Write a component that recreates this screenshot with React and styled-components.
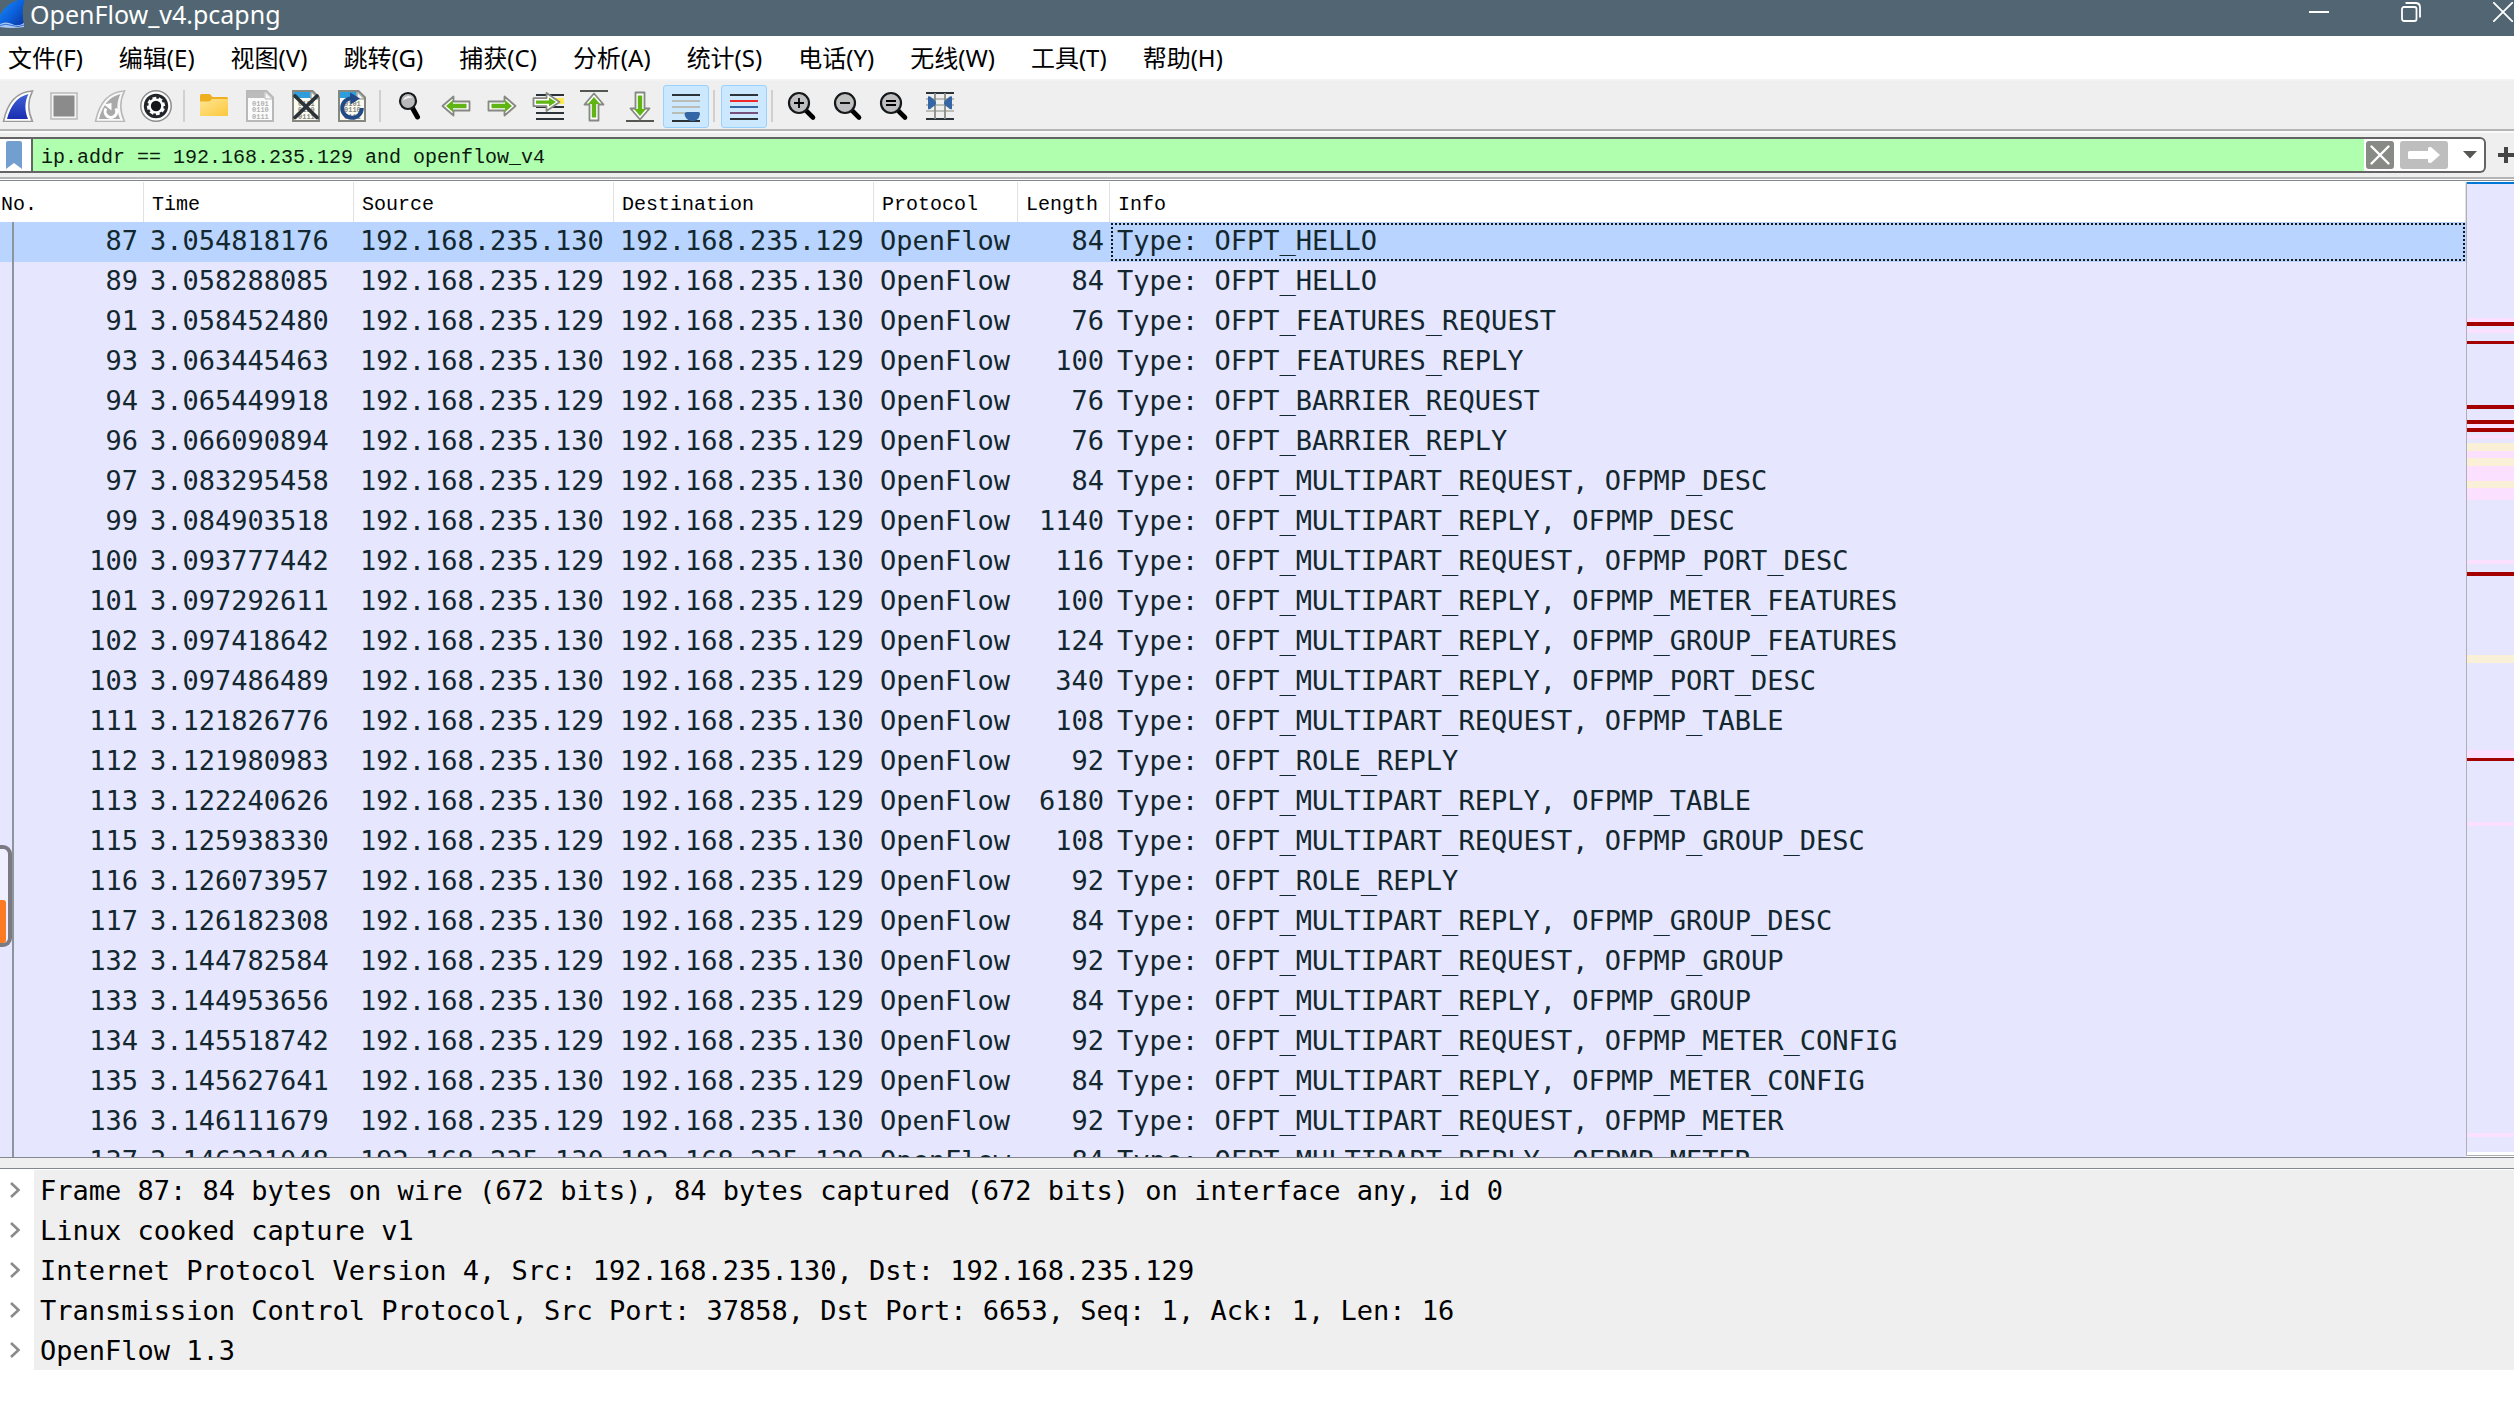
import React, { useState } from 'react';
import styled, { createGlobalStyle } from 'styled-components';

const GlobalStyle = createGlobalStyle`
  * {
    box-sizing: border-box;
  }

  body {
    margin: 0;
    overflow: hidden;
    background: #ffffff;
  }

  button {
    border: 0;
    padding: 0;
    background: none;
    font: inherit;
    color: inherit;
  }

  svg {
    display: block;
    flex: none;
  }
`;

const Window = styled.div`
  display: flex;
  flex-direction: column;
  height: 100vh;
  overflow: hidden;
`;

const TitleBar = styled.header`
  display: flex;
  flex: none;
  justify-content: space-between;
  align-items: flex-start;
  height: 36px;
  background: #516672;
  color: #ffffff;
`;

const TitleName = styled.h1`
  display: flex;
  gap: 5px;
  margin: 0;
  font: 400 25px/28px "Noto Sans", "Noto Sans CJK SC", sans-serif;
`;

const WindowControls = styled.div`
  display: flex;
  gap: 72px;
  padding: 2px 1px 0 0;
`;

const MenuBar = styled.nav`
  display: flex;
  flex: none;
  gap: 36px;
  height: 45px;
  padding: 0 8px;
  border-bottom: 2px solid #f3f3f3;
  background: #ffffff;
`;

const MenuItem = styled.button`
  color: #000000;
  font: 400 24px/42px "Noto Sans", "Noto Sans CJK SC", sans-serif;
`;

const ToolBar = styled.div`
  display: flex;
  flex: none;
  align-items: center;
  height: 50px;
  margin-left: -5px;
  padding-top: 2px;
  border-bottom: 2px solid #b5b5b5;
  background: #efefef;
`;

const ToolButton = styled.button`
  display: flex;
  justify-content: center;
  align-items: center;
  width: 46px;
  height: 43px;
  border: 1px solid ${(p) => (p.$active ? '#99d1ff' : 'transparent')};
  border-radius: 3px;
  background: ${(p) => (p.$active ? '#cce8ff' : 'transparent')};
`;

const Separator = styled.span`
  width: 2px;
  height: 32px;
  margin: 0 6px 0 4px;
  background: #d0d0d0;
`;

const FilterBar = styled.form`
  display: flex;
  flex: none;
  align-items: center;
  gap: 12px;
  height: 48px;
  border-top: 2px solid #f9f9f9;
  border-bottom: 2px solid #b5b5b5;
  background: #efefef;
`;

const FilterBox = styled.div`
  display: flex;
  flex: 1;
  align-items: center;
  height: 36px;
  border: 2px solid #646464;
  border-left: 0;
  border-radius: 0 6px 6px 0;
  background: #ffffff;
`;

const BookmarkButton = styled.button`
  display: flex;
  align-items: center;
  width: 33px;
  height: 32px;
  padding-left: 6px;
  border-right: 2px solid #646464;
`;

const FilterInput = styled.input`
  flex: 1;
  min-width: 0;
  height: 32px;
  padding: 4px 8px 0;
  border: 0;
  outline: 0;
  border-radius: 0;
  background: #afffaf;
  color: #0d1a0d;
  font: 400 20px/24px "Liberation Mono", monospace;
`;

const FilterActions = styled.div`
  display: flex;
  align-items: center;
  gap: 6px;
  padding: 0 6px 0 2px;
`;

const DropButton = styled.button`
  padding-left: 8px;
`;

const PacketPane = styled.main`
  position: relative;
  display: flex;
  flex: 1;
  min-height: 0;
  margin-top: 1px;
  border-top: 1px solid #828790;
  border-bottom: 1px solid #828790;
`;

const PacketList = styled.div`
  flex: 1;
  min-width: 0;
  overflow: hidden;
  padding-top: 1px;
`;

const Table = styled.table`
  width: 100%;
  table-layout: fixed;
  border-collapse: separate;
  border-spacing: 0;
  white-space: pre;
`;

const Col = styled.col`
  width: ${(p) => (p.$width ? `${p.$width}px` : 'auto')};
`;

const HeadCell = styled.th`
  height: 40px;
  padding: 6px 0 0 ${(p) => (p.$first ? 1 : 8)}px;
  border-right: 1px solid #e2e2e2;
  background: #ffffff;
  color: #000000;
  text-align: left;
  font: 400 20px/24px "Liberation Mono", monospace;
`;

const Row = styled.tr`
  background: ${(p) => (p.$selected ? '#b8d4ff' : '#e6e6ff')};
`;

const Cell = styled.td`
  height: 40px;
  padding: 0 6px 2px;
  overflow: hidden;
  color: #12272e;
  text-align: ${(p) => (p.$right ? 'right' : 'left')};
  font: 400 27px/38px "DejaVu Sans Mono", monospace;
`;

const NumberCell = styled(Cell)`
  background: linear-gradient(#8b959b, #8b959b) 12px 0 / 2px 100% no-repeat;
`;

const InfoCell = styled(Cell)`
  padding-left: 7px;
  outline: ${(p) => (p.$focused ? '2px dotted #12171c' : 'none')};
  outline-offset: -3px;
`;

const MiniMap = styled.aside`
  width: 48px;
  margin: 1px 0;
  border-left: 1px solid #b0b0b0;
  border-bottom: 1px solid #b0b0b0;
  overflow: hidden;

  svg {
    width: 100%;
    height: calc(100% - 3px);
    background: #e6e6ff;
  }
`;

// floats over the left edge of the list
const EdgeHandle = styled.div`
  position: absolute;
  left: 0;
  top: 664px;
  display: flex;
  align-items: flex-end;
  width: 12px;
  height: 102px;
  border: 4px solid #7b7a83;
  border-left: 0;
  border-radius: 0 9px 9px 0;
  background: #f0efff;
`;

const EdgeLevel = styled.span`
  width: 6px;
  height: 43px;
  border-radius: 0 3px 3px 0;
  background: #fc7a22;
`;

const Splitter = styled.div`
  flex: none;
  height: 11px;
  border-bottom: 1px solid #828790;
  background: #efefef;
`;

const DetailsPane = styled.section`
  flex: none;
  padding: 1px 0 35px;
  background: #ffffff;
`;

const DetailRow = styled.button`
  display: flex;
  align-items: center;
  gap: 12px;
  width: 100%;
  height: 40px;
  padding-left: 8px;
`;

const DetailText = styled.span`
  flex: 1;
  padding: 1px 6px 0;
  background: #efefef;
  color: #000000;
  text-align: left;
  white-space: pre;
  font: 400 27px/39px "DejaVu Sans Mono", monospace;
`;

const menus = ['文件(F)', '编辑(E)', '视图(V)', '跳转(G)', '捕获(C)', '分析(A)', '统计(S)', '电话(Y)', '无线(W)', '工具(T)', '帮助(H)'];

const HOST_A = '192.168.235.130';
const HOST_B = '192.168.235.129';

// no, time, sent by A, length, info
const packets = [
  [87, '3.054818176', true, 84, 'OFPT_HELLO'],
  [89, '3.058288085', false, 84, 'OFPT_HELLO'],
  [91, '3.058452480', false, 76, 'OFPT_FEATURES_REQUEST'],
  [93, '3.063445463', true, 100, 'OFPT_FEATURES_REPLY'],
  [94, '3.065449918', false, 76, 'OFPT_BARRIER_REQUEST'],
  [96, '3.066090894', true, 76, 'OFPT_BARRIER_REPLY'],
  [97, '3.083295458', false, 84, 'OFPT_MULTIPART_REQUEST, OFPMP_DESC'],
  [99, '3.084903518', true, 1140, 'OFPT_MULTIPART_REPLY, OFPMP_DESC'],
  [100, '3.093777442', false, 116, 'OFPT_MULTIPART_REQUEST, OFPMP_PORT_DESC'],
  [101, '3.097292611', true, 100, 'OFPT_MULTIPART_REPLY, OFPMP_METER_FEATURES'],
  [102, '3.097418642', true, 124, 'OFPT_MULTIPART_REPLY, OFPMP_GROUP_FEATURES'],
  [103, '3.097486489', true, 340, 'OFPT_MULTIPART_REPLY, OFPMP_PORT_DESC'],
  [111, '3.121826776', false, 108, 'OFPT_MULTIPART_REQUEST, OFPMP_TABLE'],
  [112, '3.121980983', true, 92, 'OFPT_ROLE_REPLY'],
  [113, '3.122240626', true, 6180, 'OFPT_MULTIPART_REPLY, OFPMP_TABLE'],
  [115, '3.125938330', false, 108, 'OFPT_MULTIPART_REQUEST, OFPMP_GROUP_DESC'],
  [116, '3.126073957', true, 92, 'OFPT_ROLE_REPLY'],
  [117, '3.126182308', true, 84, 'OFPT_MULTIPART_REPLY, OFPMP_GROUP_DESC'],
  [132, '3.144782584', false, 92, 'OFPT_MULTIPART_REQUEST, OFPMP_GROUP'],
  [133, '3.144953656', true, 84, 'OFPT_MULTIPART_REPLY, OFPMP_GROUP'],
  [134, '3.145518742', false, 92, 'OFPT_MULTIPART_REQUEST, OFPMP_METER_CONFIG'],
  [135, '3.145627641', true, 84, 'OFPT_MULTIPART_REPLY, OFPMP_METER_CONFIG'],
  [136, '3.146111679', false, 92, 'OFPT_MULTIPART_REQUEST, OFPMP_METER'],
  [137, '3.146221048', true, 84, 'OFPT_MULTIPART_REPLY, OFPMP_METER'],
];

const details = [
  'Frame 87: 84 bytes on wire (672 bits), 84 bytes captured (672 bits) on interface any, id 0',
  'Linux cooked capture v1',
  'Internet Protocol Version 4, Src: 192.168.235.130, Dst: 192.168.235.129',
  'Transmission Control Protocol, Src Port: 37858, Dst Port: 6653, Seq: 1, Ack: 1, Len: 16',
  'OpenFlow 1.3',
];

const PINK = '#fce0ff';
const RED = '#a40000';
const SAND = '#faf0d7';

// y, height, colour
const stripes = [
  [0, 2, '#0078d7'],
  [136, 4, PINK], [140, 4, RED], [147, 4, PINK], [159, 3, RED],
  [223, 4, RED], [238, 4, RED], [242, 4, PINK], [246, 4, RED], [253, 4, PINK],
  [261, 8, SAND], [269, 7, PINK], [276, 8, SAND], [284, 15, PINK], [299, 7, SAND], [306, 12, PINK],
  [378, 4, PINK], [390, 4, RED], [473, 8, SAND], [568, 8, PINK], [576, 3, RED],
  [640, 4, PINK], [951, 4, PINK],
];

const Icon = ({ children }) => (
  <svg width="32" height="32" viewBox="0 0 32 32" fill="none" aria-hidden="true">{children}</svg>
);

const FinIcon = () => (
  <Icon>
    <path d="M1.5 31.5C5 14 13 2 30.5 1C25.500 11 25.500 21 30.5 31.5Z" fill="#fff" stroke="#9a9a9a" strokeWidth="1.6" />
    <path d="M5 29C8.5 16 14.5 7 26.5 4C22.5 12 22.5 20 26 29Z" fill="url(#fin)" />
    <defs>
      <linearGradient id="fin" x1="0" y1="0" x2="0" y2="1">
        <stop stopColor="#4060d8" />
        <stop offset="1" stopColor="#1a2fb0" />
      </linearGradient>
    </defs>
  </Icon>
);

const StopIcon = () => (
  <Icon>
    <rect x="3" y="3" width="26" height="26" fill="#f4f4f4" stroke="#bdbdbd" strokeWidth="1.6" />
    <rect x="5.5" y="5.5" width="21" height="21" fill="#8b8b8b" />
  </Icon>
);

const RestartIcon = () => (
  <Icon>
    <path d="M1.5 31.5C5 14 13 2 30.5 1C25.5 11 25.5 21 30.5 31.5Z" fill="#f8f8f8" stroke="#b9b9b9" strokeWidth="1.6" />
    <path d="M5 29C8.5 16 14.5 7 26.5 4C22.5 12 22.5 20 26 29Z" fill="#a9a9a9" />
    <path d="M12 18.500A5.800 5.800 0 1 0 21.800 18.500" stroke="#fff" strokeWidth="3" />
    <path d="M10 14.500L17.500 13V20.500Z" fill="#fff" />
  </Icon>
);

const OptionsIcon = () => (
  <Icon>
    <circle cx="16" cy="16" r="15.2" fill="#fff" stroke="#8d8d8d" strokeWidth="1.5" />
    <circle cx="16" cy="16" r="12.2" fill="#22262a" />
    <circle cx="16" cy="16" r="9.2" fill="#fff" />
    <circle cx="16" cy="16" r="8.800" stroke="#22262a" strokeWidth="2.4" strokeDasharray="2.8 4.110" />
    <circle cx="16" cy="16" r="5.2" fill="#15181b" />
  </Icon>
);

const FolderIcon = () => (
  <Icon>
    <path d="M2 5.5Q2 4 3.5 4H11Q12 4 12.8 5L14.5 7H28.5Q30 7 30 8.5V24H2z" fill="#eeb021" />
    <path d="M2 11.5H10.5Q12 11.5 13 10.2L14 9H30V25Q30 26 29 26H3Q2 26 2 25Z" fill="url(#folder)" />
    <defs>
      <linearGradient id="folder" x1="0" y1="0" x2="1" y2="1">
        <stop stopColor="#ffe694" />
        <stop offset="1" stopColor="#fbc73a" />
      </linearGradient>
    </defs>
  </Icon>
);

const Bits = styled.text`
  font: 700 7px "Liberation Mono", monospace;
`;

const Sheet = ({ paper, edge, top, ink }) => (
  <>
    <path d="M3 1H22.5L29 7.5V31H3Z" fill={paper} stroke={edge} strokeWidth="2" />
    <path d="M4 2H20.5V8H4Z" fill={top} />
    <path d="M21 1.5V9H28.5Z" fill="#f5f5f5" stroke={edge} />
    <Bits x="8" y="16" fill={ink}>0101</Bits>
    <Bits x="8" y="22" fill={ink}>0110</Bits>
    <Bits x="8" y="29" fill={ink}>0111</Bits>
  </>
);

const SaveIcon = () => (
  <Icon><Sheet paper="#fbfbfb" edge="#b9b9b9" top="#bcbcbc" ink="#b0b0b0" /></Icon>
);

const CloseFileIcon = () => (
  <Icon>
    <Sheet paper="#fbfbf0" edge="#858781" top="#2d9ddb" ink="#858781" />
    <path d="M5 6L27 27.5M27 6L5 27.5" stroke="#2b3338" strokeWidth="3.8" strokeLinecap="round" />
  </Icon>
);

const ReloadIcon = () => (
  <Icon>
    <Sheet paper="#fbfbf0" edge="#858781" top="#2d9ddb" ink="#858781" />
    <path d="M17 8.3A9.800 9.800 0 1 0 25.8 18" stroke="#214a87" strokeWidth="4" />
    <path d="M14 2.5L24 8.5L14.5 14.5Z" fill="#214a87" />
  </Icon>
);

const FindIcon = () => (
  <Icon>
    <path d="M18.5 18L23.5 27" stroke="#000" strokeWidth="5" strokeLinecap="round" />
    <circle cx="14" cy="11" r="8" fill="#b9b9b9" stroke="#16191b" strokeWidth="2.2" />
    <path d="M9 10.5Q10 6.5 14.5 6Q17.5 6 18.5 8Q14 7 9 10.5Z" fill="#f3f3f3" />
  </Icon>
);

const Arrow = ({ transform }) => (
  <g transform={transform}>
    <path d="M2.5 16L13.5 6.5V11.5H29.5V20.5H13.5V25.5Z" fill="#fff" stroke="#868882" strokeWidth="1.8" strokeLinejoin="round" />
    <path d="M6 16L13 10V13.8H26.5V18.2H13V22Z" fill="#60b414" />
  </g>
);

const PrevIcon = () => <Icon><Arrow /></Icon>;
const NextIcon = () => <Icon><Arrow transform="rotate(180 16 16)" /></Icon>;

const GotoIcon = () => (
  <Icon>
    <path d="M4 5H32M4 17H32M4 23H32M4 29H32" stroke="#2b3338" strokeWidth="2" />
    <path d="M22 8H32V14H22Z" fill="#fce94f" />
    <path d="M1.5 8.2H14.5V3L27.5 12L14.5 21V16.2H1.5Z" fill="#fff" stroke="#868882" strokeWidth="1.8" strokeLinejoin="round" />
    <path d="M4 10.5H17V7.5L24 12L17 16.5V13.8H4Z" fill="#60b414" />
  </Icon>
);

const FirstIcon = () => (
  <Icon>
    <path d="M2 1H30" stroke="#555753" strokeWidth="2" />
    <Arrow transform="translate(0 1) rotate(90 16 16)" />
  </Icon>
);

const LastIcon = () => (
  <Icon>
    <path d="M2 31H30" stroke="#555753" strokeWidth="2" />
    <Arrow transform="rotate(-90 16 16)" />
  </Icon>
);

const ScrollIcon = () => (
  <Icon>
    <path d="M2 5H30M2 31H30" stroke="#2b3338" strokeWidth="2" />
    <path d="M2 11H30M2 17H30M2 23H30" stroke="#babdb6" strokeWidth="2" />
    <path d="M14.5 24Q15 22 17 22H28Q30 22 30 24Q29.5 28 26.5 30Q25.5 31 22.5 31T18.5 30Q15 28 14.5 24Z" fill="#3465a4" />
  </Icon>
);

const ColorizeIcon = () => (
  <Icon>
    <path d="M2 5H30M2 29H30" stroke="#2b3338" strokeWidth="2" />
    <path d="M2 11H30" stroke="#ef2929" strokeWidth="2" />
    <path d="M2 17H30" stroke="#3465a4" strokeWidth="2" />
    <path d="M2 23H30" stroke="#75507b" strokeWidth="2" />
  </Icon>
);

const ZoomIcon = ({ sign }) => (
  <Icon>
    <path d="M19.5 20L27 27.5" stroke="#000" strokeWidth="4.6" strokeLinecap="round" />
    <circle cx="13" cy="13" r="10" fill="#bfbfbf" stroke="#15181b" strokeWidth="2.2" />
    <path d={sign} stroke="#000" strokeWidth="1.8" />
  </Icon>
);

const ZoomInIcon = () => <ZoomIcon sign="M8 13H18M13 8V18" />;
const ZoomOutIcon = () => <ZoomIcon sign="M8 13H18" />;
const ZoomResetIcon = () => <ZoomIcon sign="M8 11H18M8 15H18" />;

const ColumnsIcon = () => (
  <Icon>
    <path d="M2 9H30M2 15H30M2 21H30" stroke="#babdb6" strokeWidth="1.8" />
    <path d="M2 3H30M2 29H30" stroke="#2b3338" strokeWidth="2" />
    <path d="M11 3V29M21 3V29" stroke="#888a85" strokeWidth="1.8" />
    <path d="M4 6.5Q6 5.5 8 8Q12 11 12 13T8 17.5Q6 20 4 19Z" fill="#3465a4" />
    <path d="M28 6.5Q26 5.5 24 8Q20 11 20 13T24 17.5Q26 20 28 19Z" fill="#3465a4" />
  </Icon>
);

const tools = [
  ['Start capture', FinIcon],
  ['Stop capture', StopIcon],
  ['Restart capture', RestartIcon],
  ['Capture options', OptionsIcon],
  null,
  ['Open', FolderIcon],
  ['Save', SaveIcon],
  ['Close file', CloseFileIcon],
  ['Reload', ReloadIcon],
  null,
  ['Find packet', FindIcon],
  ['Previous packet', PrevIcon],
  ['Next packet', NextIcon],
  ['Go to packet', GotoIcon],
  ['First packet', FirstIcon],
  ['Last packet', LastIcon],
  ['Auto scroll', ScrollIcon, true],
  null,
  ['Colorize', ColorizeIcon, true],
  null,
  ['Zoom in', ZoomInIcon],
  ['Zoom out', ZoomOutIcon],
  ['Normal size', ZoomResetIcon],
  ['Resize columns', ColumnsIcon],
];

const Title = () => (
  <TitleBar>
    <TitleName>
      <svg width="25" height="28" viewBox="0 0 25 28" aria-hidden="true">
        <path d="M0 15Q8 0 25 -1Q21 8 24 27H0Z" fill="url(#logo)" />
        <path d="M0 24Q6 21 12 24T24 23V27Q12 29 0 27Z" fill="#a9c8f5" />
        <path d="M0 25.5Q6 23 12 25.5T24 25" stroke="#3470d8" fill="none" />
        <defs>
          <linearGradient id="logo" x1="0" y1="0" x2="1" y2="1">
            <stop stopColor="#1c8cf5" />
            <stop offset=".5" stopColor="#0b62dd" />
            <stop offset="1" stopColor="#0a2f9c" />
          </linearGradient>
        </defs>
      </svg>
      OpenFlow_v4.pcapng
    </TitleName>
    <WindowControls>
      <button aria-label="Minimize">
        <svg width="20" height="20"><path d="M0 10H20" stroke="#fff" strokeWidth="2" /></svg>
      </button>
      <button aria-label="Restore">
        <svg width="20" height="20" fill="none" stroke="#fff" strokeWidth="1.8">
          <rect x="1" y="5" width="14.5" height="14" rx="2" />
          <path d="M4.5 1H14.5Q19 1 19 5.5V15.5" />
        </svg>
      </button>
      <button aria-label="Close">
        <svg width="20" height="20"><path d="M0 0L20 20M20 0L0 20" stroke="#fff" strokeWidth="1.8" /></svg>
      </button>
    </WindowControls>
  </TitleBar>
);

const Filter = () => {
  const [filter, setFilter] = useState('ip.addr == 192.168.235.129 and openflow_v4');

  return (
    <FilterBar onSubmit={(e) => e.preventDefault()}>
      <FilterBox>
        <BookmarkButton type="button" aria-label="Bookmarks">
          <svg width="16" height="28"><path d="M0 2Q0 0 2 0H14Q16 0 16 2V28L8 22L0 28Z" fill="#729fcf" /></svg>
        </BookmarkButton>
        <FilterInput
          aria-label="Display filter"
          spellCheck={false}
          value={filter}
          onChange={(e) => setFilter(e.target.value)}
        />
        <FilterActions>
          <button type="button" aria-label="Clear" onClick={() => setFilter('')}>
            <svg width="28" height="28">
              <rect width="28" height="28" rx="3" fill="#888a85" />
              <path d="M5.5 5.5L22.5 22.5M22.5 5.5L5.5 22.5" stroke="#fff" strokeWidth="2.4" strokeLinecap="round" />
            </svg>
          </button>
          <button type="submit" aria-label="Apply">
            <svg width="48" height="28">
              <rect width="48" height="28" rx="3" fill="#bebebe" />
              <path d="M8 11.5Q8 10 9.5 10H28V7Q28 6 31 6L40 14L31 22Q28 22 28 21V18H9.5Q8 18 8 16.5Z" fill="#fff" />
            </svg>
          </button>
          <DropButton type="button" aria-label="Recent filters">
            <svg width="16" height="8"><path d="M1 0H15L8 7.5Z" fill="#555753" /></svg>
          </DropButton>
        </FilterActions>
      </FilterBox>
      <button type="button" aria-label="Add filter button">
        <svg width="16" height="16"><path d="M0 8H16M8 0V16" stroke="#454545" strokeWidth="4" /></svg>
      </button>
    </FilterBar>
  );
};

const Packets = () => {
  const [selected, setSelected] = useState(87);

  return (
    <PacketList>
      <Table>
        <colgroup>
          {[144, 210, 260, 260, 144, 92, 0].map((w, i) => <Col key={i} $width={w} />)}
        </colgroup>
        <thead>
          <tr>
            {['No.', 'Time', 'Source', 'Destination', 'Protocol', 'Length', 'Info'].map((name, i) => (
              <HeadCell key={name} $first={i === 0}>{name}</HeadCell>
            ))}
          </tr>
        </thead>
        <tbody>
          {packets.map(([no, time, fromA, length, info]) => (
            <Row key={no} $selected={no === selected} onClick={() => setSelected(no)}>
              <NumberCell $right>{no}</NumberCell>
              <Cell>{time}</Cell>
              <Cell>{fromA ? HOST_A : HOST_B}</Cell>
              <Cell>{fromA ? HOST_B : HOST_A}</Cell>
              <Cell>OpenFlow</Cell>
              <Cell $right>{length}</Cell>
              <InfoCell $focused={no === selected}>Type: {info}</InfoCell>
            </Row>
          ))}
        </tbody>
      </Table>
    </PacketList>
  );
};

const App = () => {
  return (
    <Window>
      <GlobalStyle />
      <Title />
      <MenuBar>
        {menus.map((name) => <MenuItem key={name}>{name}</MenuItem>)}
      </MenuBar>
      <ToolBar>
        {tools.map((tool, i) => {
          if (!tool) return <Separator key={i} />;
          const [label, Picture, active] = tool;
          return (
            <ToolButton key={label} aria-label={label} $active={active}>
              <Picture />
            </ToolButton>
          );
        })}
      </ToolBar>
      <Filter />
      <PacketPane>
        <Packets />
        <MiniMap>
          <svg>
            {stripes.map(([y, height, color]) => (
              <rect key={y} x="0" y={y} width="100%" height={height} fill={color} />
            ))}
          </svg>
        </MiniMap>
        <EdgeHandle>
          <EdgeLevel />
        </EdgeHandle>
      </PacketPane>
      <Splitter />
      <DetailsPane>
        {details.map((line) => (
          <DetailRow key={line} aria-expanded="false">
            <svg width="14" height="18" fill="none">
              <path d="M3 2L10.5 9L3 16" stroke="#8a8a8a" strokeWidth="2.6" />
            </svg>
            <DetailText>{line}</DetailText>
          </DetailRow>
        ))}
      </DetailsPane>
    </Window>
  );
};

export default App;
